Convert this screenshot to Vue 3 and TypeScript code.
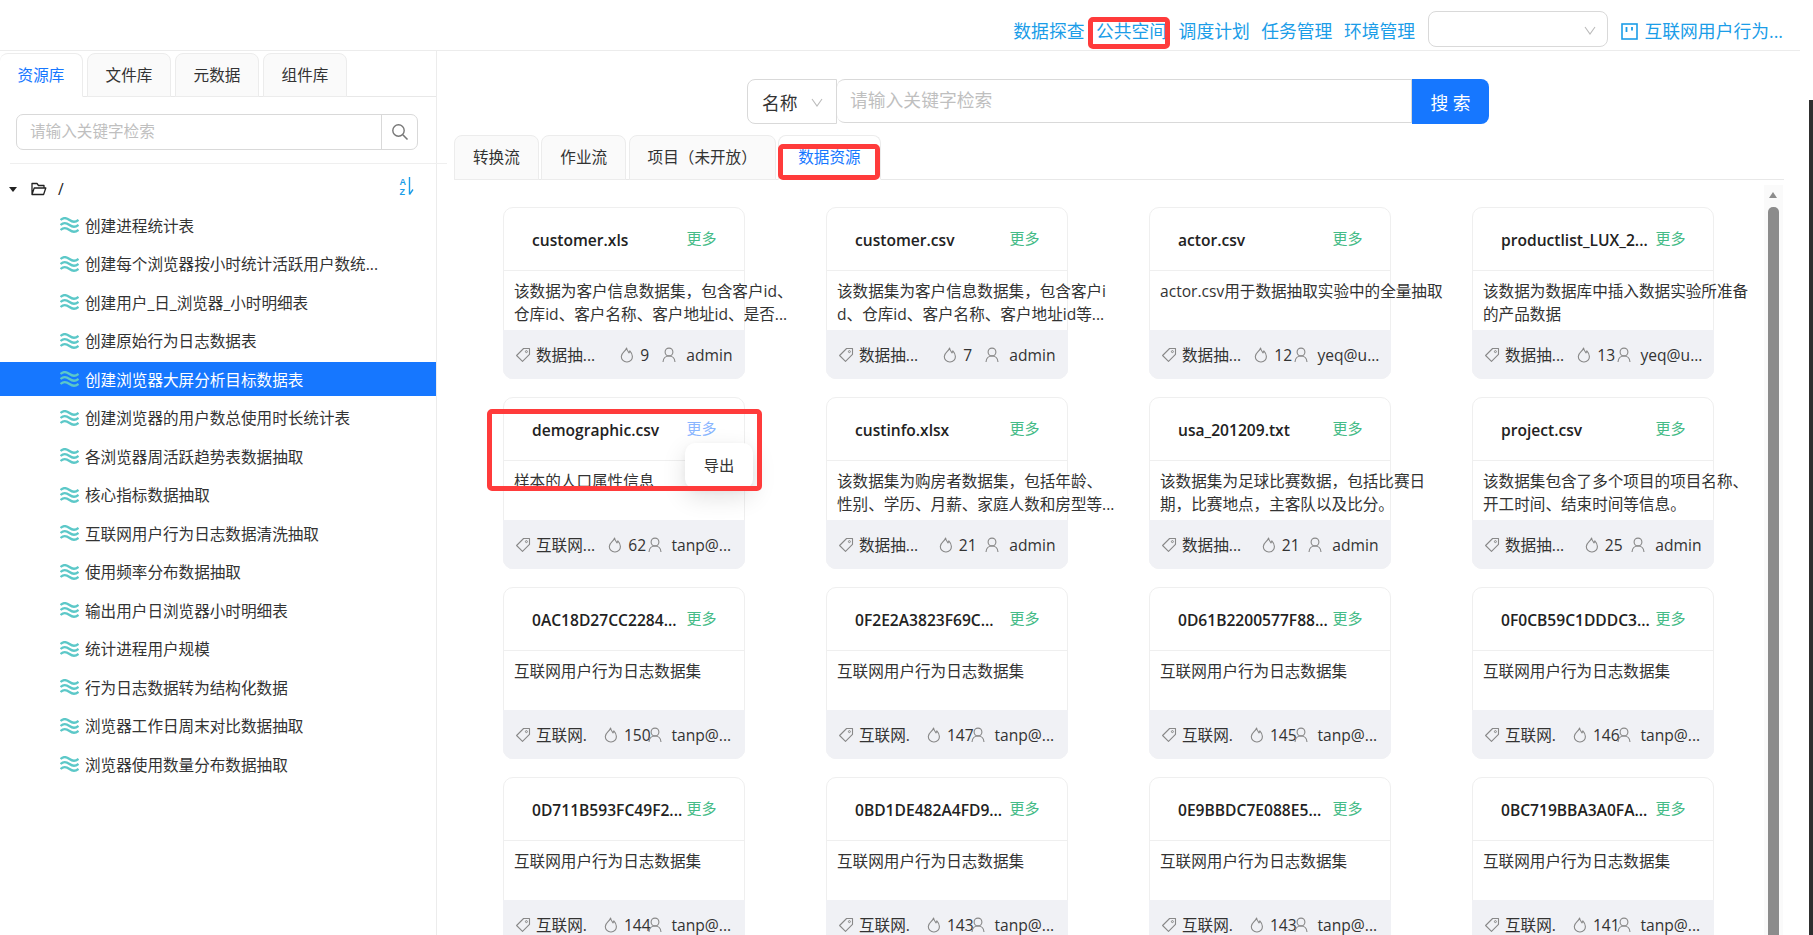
<template>
  <div class="page">
    <header class="topbar">
      <nav class="nav">
        <a v-for="item in navItems" :key="item" class="nav-link" :class="{ marked: item === '公共空间' }">
          {{ item }}
          <span v-if="item === '公共空间'" class="mark mark-nav"></span>
        </a>
      </nav>
      <div class="top-select">
        <svg class="chevron" width="14" height="14" viewBox="0 0 14 14"><path d="M2 4l5 7 5-7" fill="none" stroke="#bbb" stroke-width="1.1" /></svg>
      </div>
      <a class="project">
        <svg width="17" height="17" viewBox="0 0 17 17">
          <rect x="1" y="1" width="15" height="15" fill="none" stroke="#1b9de8" stroke-width="1.6" />
          <path d="M5.5 4v5M11 4v3.5" stroke="#1b9de8" stroke-width="1.8" fill="none" />
        </svg>
        <span>互联网用户行为...</span>
      </a>
    </header>

    <div class="body">
      <aside class="sider">
        <div class="tabs-left">
          <div v-for="(tab, i) in leftTabs" :key="tab" class="tab-left" :class="{ active: i === 0 }">{{ tab }}</div>
        </div>
        <div class="left-search">
          <div class="left-input">请输入关键字检索</div>
          <div class="left-btn">
            <svg width="18" height="18" viewBox="0 0 18 18">
              <circle cx="7.5" cy="7.5" r="5.7" fill="none" stroke="#777" stroke-width="1.4" />
              <path d="M11.8 11.8L16.5 16.5" stroke="#777" stroke-width="1.6" fill="none" />
            </svg>
          </div>
        </div>
        <div class="left-divider"></div>
        <div class="tree-root">
          <span class="caret"></span>
          <svg class="folder" width="16" height="14" viewBox="0 0 16 14">
            <path d="M1 12.5V1.5h5l1.5 2H13v2.5M1 12.5L3.2 6h11.6l-2.2 6.5z" fill="none" stroke="#222" stroke-width="1.3" stroke-linejoin="round" />
          </svg>
          <span class="root-name">/</span>
          <span class="sort">
            <span class="sort-letters"><b>A</b><b>Z</b></span>
            <svg width="6" height="19" viewBox="0 0 6 19"><path d="M1.500 0v17.500M1.500 17.500l3.500-5" fill="none" stroke="#1b9de8" stroke-width="1.4" /></svg>
          </span>
        </div>
        <ul class="tree">
          <li v-for="(name, i) in treeItems" :key="name" class="tree-row" :class="{ selected: i === 4 }">
            <svg width="19" height="16" viewBox="0 0 19 16">
              <path
                v-for="y in [3, 8, 13]"
                :key="y"
                :d="`M.5 ${y}c2.7-2.6 5.5-2.6 9 0s6 2.4 9 -.2`"
                fill="none"
                stroke="#5cc8c8"
                stroke-width="2.3"
              />
            </svg>
            <span>{{ name }}</span>
          </li>
        </ul>
      </aside>

      <main class="main">
        <div class="search-row">
          <div class="search-type">
            <span>名称</span>
            <svg width="14" height="14" viewBox="0 0 14 14"><path d="M2 4l5 7 5-7" fill="none" stroke="#bbb" stroke-width="1.1" /></svg>
          </div>
          <div class="search-input">请输入关键字检索</div>
          <button class="search-btn">搜 索</button>
        </div>

        <div class="tabs-main">
          <div v-for="tab in mainTabs" :key="tab" class="tab-main" :class="{ active: tab === '数据资源' }">
            {{ tab }}
            <span v-if="tab === '数据资源'" class="mark mark-tab"></span>
          </div>
        </div>

        <div class="panel">
          <div class="grid">
            <article v-for="card in cards" :key="card.title" class="card">
              <div class="card-head">
                <span class="card-title">{{ card.title }}</span>
                <span class="more" :class="{ hover: card.menu }">更多</span>
              </div>
              <div class="card-desc">
                <p v-for="line in card.desc" :key="line">{{ line }}</p>
              </div>
              <div class="card-foot">
                <span class="foot-tag">
                  <svg width="16" height="16" viewBox="0 0 16 16">
                    <path d="M8.6 1.5h5.9v5.9l-7 7-5.9-5.9z" fill="none" stroke="#888" stroke-width="1.1" stroke-linejoin="round" />
                    <circle cx="11.4" cy="4.6" r="1" fill="none" stroke="#888" />
                  </svg>
                  <span>{{ card.tag }}</span>
                </span>
                <span class="foot-hot">
                  <svg width="14" height="16" viewBox="0 0 14 16">
                    <path d="M6.6 1c.3 2.6 1.5 3.5 2.5 4.8.4-.6.6-1.1.7-1.9 1.5 1.6 2.6 3.4 2.6 5.5A5.400 5.400 0 0 1 7 15 5.500 5.500 0 0 1 1.300 9.400C1.300 6 5.500 4.600 6.600 1z" fill="none" stroke="#888" stroke-width="1.1" stroke-linejoin="round" />
                  </svg>
                  <span>{{ card.hot }}</span>
                </span>
                <span class="foot-user">
                  <svg width="14" height="16" viewBox="0 0 14 16">
                    <circle cx="7" cy="5" r="3.9" fill="none" stroke="#888" stroke-width="1.1" />
                    <path d="M1 15c.3-3.8 2.6-6 6-6s5.700 2.200 6 6" fill="none" stroke="#888" stroke-width="1.1" />
                  </svg>
                  <span class="user-name" :class="{ long: card.user !== 'admin' }">{{ card.user }}</span>
                </span>
              </div>
              <template v-if="card.menu">
                <div class="menu">导出</div>
                <span class="mark mark-card"></span>
              </template>
            </article>
          </div>
          <div class="scroll-track">
            <span class="scroll-arrow"></span>
            <span class="scroll-thumb"></span>
          </div>
        </div>
      </main>
    </div>
    <div class="window-edge"></div>
  </div>
</template>

<script setup lang="ts">
interface Card {
  title: string;
  desc: string[];
  tag: string;
  hot: number;
  user: string;
  menu?: boolean;
}

const navItems = ['数据探查', '公共空间', '调度计划', '任务管理', '环境管理'];
const leftTabs = ['资源库', '文件库', '元数据', '组件库'];
const mainTabs = ['转换流', '作业流', '项目（未开放）', '数据资源'];

const treeItems = [
  '创建进程统计表',
  '创建每个浏览器按小时统计活跃用户数统...',
  '创建用户_日_浏览器_小时明细表',
  '创建原始行为日志数据表',
  '创建浏览器大屏分析目标数据表',
  '创建浏览器的用户数总使用时长统计表',
  '各浏览器周活跃趋势表数据抽取',
  '核心指标数据抽取',
  '互联网用户行为日志数据清洗抽取',
  '使用频率分布数据抽取',
  '输出用户日浏览器小时明细表',
  '统计进程用户规模',
  '行为日志数据转为结构化数据',
  '浏览器工作日周末对比数据抽取',
  '浏览器使用数量分布数据抽取'
];

const logDesc = ['互联网用户行为日志数据集'];

const cards: Card[] = [
  { title: 'customer.xls', desc: ['该数据为客户信息数据集，包含客户id、', '仓库id、客户名称、客户地址id、是否...'], tag: '数据抽...', hot: 9, user: 'admin' },
  { title: 'customer.csv', desc: ['该数据集为客户信息数据集，包含客户i', 'd、仓库id、客户名称、客户地址id等...'], tag: '数据抽...', hot: 7, user: 'admin' },
  { title: 'actor.csv', desc: ['actor.csv用于数据抽取实验中的全量抽取'], tag: '数据抽...', hot: 12, user: 'yeq@u...' },
  { title: 'productlist_LUX_2...', desc: ['该数据为数据库中插入数据实验所准备', '的产品数据'], tag: '数据抽...', hot: 13, user: 'yeq@u...' },
  { title: 'demographic.csv', desc: ['样本的人口属性信息'], tag: '互联网...', hot: 62, user: 'tanp@...', menu: true },
  { title: 'custinfo.xlsx', desc: ['该数据集为购房者数据集，包括年龄、', '性别、学历、月薪、家庭人数和房型等...'], tag: '数据抽...', hot: 21, user: 'admin' },
  { title: 'usa_201209.txt', desc: ['该数据集为足球比赛数据，包括比赛日', '期，比赛地点，主客队以及比分。'], tag: '数据抽...', hot: 21, user: 'admin' },
  { title: 'project.csv', desc: ['该数据集包含了多个项目的项目名称、', '开工时间、结束时间等信息。'], tag: '数据抽...', hot: 25, user: 'admin' },
  { title: '0AC18D27CC2284...', desc: logDesc, tag: '互联网.', hot: 150, user: 'tanp@...' },
  { title: '0F2E2A3823F69C...', desc: logDesc, tag: '互联网.', hot: 147, user: 'tanp@...' },
  { title: '0D61B2200577F88...', desc: logDesc, tag: '互联网.', hot: 145, user: 'tanp@...' },
  { title: '0F0CB59C1DDDC3...', desc: logDesc, tag: '互联网.', hot: 146, user: 'tanp@...' },
  { title: '0D711B593FC49F2...', desc: logDesc, tag: '互联网.', hot: 144, user: 'tanp@...' },
  { title: '0BD1DE482A4FD9...', desc: logDesc, tag: '互联网.', hot: 143, user: 'tanp@...' },
  { title: '0E9BBDC7E088E5...', desc: logDesc, tag: '互联网.', hot: 143, user: 'tanp@...' },
  { title: '0BC719BBA3A0FA...', desc: logDesc, tag: '互联网.', hot: 141, user: 'tanp@...' }
];
</script>

<style>
html,
body {
  margin: 0;
  background: #fff;
  overflow: hidden;
}
</style>

<style scoped>
.page {
  position: relative;
  display: flex;
  flex-direction: column;
  height: 935px;
  overflow: hidden;
  font-family: "Open Sans", "Noto Sans CJK SC", sans-serif;
  font-size: 15.6px;
  color: #333;
}

.topbar {
  box-sizing: border-box;
  flex: none;
  display: flex;
  align-items: flex-start;
  justify-content: flex-end;
  width: 1800px;
  height: 51px;
  padding-right: 17px;
  border-bottom: 1px solid #ececec;
}

.nav {
  display: flex;
  gap: 11.5px;
  margin-top: 19px;
}

.nav-link {
  position: relative;
  font-size: 17.8px;
  line-height: 24px;
  color: #1b9de8;
  white-space: nowrap;
}

.top-select {
  box-sizing: border-box;
  position: relative;
  width: 180px;
  height: 36px;
  margin: 11px 13px 0 12.5px;
  border: 1px solid #d9d9d9;
  border-radius: 8px;
}

.chevron {
  position: absolute;
  right: 10px;
  top: 11px;
}

.project {
  display: flex;
  align-items: center;
  gap: 7px;
  margin-top: 19px;
  font-size: 17.8px;
  line-height: 24px;
  color: #1b9de8;
  white-space: nowrap;
}

.mark {
  position: absolute;
  box-sizing: border-box;
  border: 5px solid #ff3b3b;
  border-radius: 5px;
  pointer-events: none;
}

.mark-nav {
  left: -8px;
  top: -2px;
  width: 82px;
  height: 32px;
}

.mark-tab {
  left: -1px;
  top: 8px;
  width: 102px;
  height: 36px;
}

.mark-card {
  left: -17px;
  top: 11px;
  width: 275px;
  height: 82px;
}

.body {
  flex: 1;
  display: flex;
  min-height: 0;
}

.sider {
  box-sizing: border-box;
  flex: none;
  width: 437px;
  padding-top: 2px;
  border-right: 1px solid #ececec;
}

.tabs-left {
  display: flex;
  gap: 4px;
  height: 43px;
  border-bottom: 1px solid #e8e8e8;
}

.tab-left {
  box-sizing: border-box;
  width: 84px;
  height: 44px;
  line-height: 42px;
  text-align: center;
  background: #fafafa;
  border: 1px solid #ececec;
  border-radius: 8px 8px 0 0;
}

.tab-left.active {
  width: 83px;
  color: #1677ff;
  background: #fff;
  border-left: 0;
  border-bottom-color: #fff;
}

.left-search {
  box-sizing: border-box;
  display: flex;
  width: 402px;
  height: 36px;
  margin: 17px 0 0 16px;
  border: 1px solid #d9d9d9;
  border-radius: 7px;
}

.left-input {
  flex: 1;
  padding-left: 13px;
  line-height: 33px;
  color: #bfbfbf;
}

.left-btn {
  display: flex;
  align-items: center;
  justify-content: center;
  width: 35px;
  border-left: 1px solid #d9d9d9;
}

.left-divider {
  width: 437px;
  height: 1px;
  margin: 13px 0 0 10px;
  background: #efefef;
}

.tree-root {
  position: relative;
  display: flex;
  align-items: center;
  height: 30px;
  margin-top: 10px;
  padding-left: 9px;
}

.caret {
  width: 0;
  height: 0;
  border-left: 4px solid transparent;
  border-right: 4px solid transparent;
  border-top: 5px solid #222;
}

.folder {
  margin-left: 14px;
}

.root-name {
  margin-left: 11px;
  color: #222;
}

.sort {
  display: flex;
  gap: 2px;
  margin-left: auto;
  margin-right: 22px;
  margin-top: -4px;
  color: #1b9de8;
}

.sort-letters {
  display: flex;
  flex-direction: column;
  font-family: "Liberation Sans", sans-serif;
  font-size: 9px;
  line-height: 10.4px;
}

.tree {
  margin: 4px 0 0;
  padding: 0;
  list-style: none;
}

.tree-row {
  display: flex;
  align-items: center;
  gap: 6px;
  height: 34px;
  margin-bottom: 4.5px;
  padding-left: 60px;
  white-space: nowrap;
}

.tree-row.selected {
  color: #fff;
  background: #1677ff;
}

.main {
  flex: none;
  display: flex;
  flex-direction: column;
  width: 1330px;
  margin-left: 17px;
}

.search-row {
  flex: none;
  display: flex;
  margin: 28px 0 0 293px;
  height: 45px;
}

.search-type {
  box-sizing: border-box;
  display: flex;
  align-items: center;
  gap: 12px;
  width: 90px;
  padding-left: 14px;
  font-size: 17.8px;
  border: 1px solid #d9d9d9;
  border-radius: 8px 0 0 8px;
}

.search-input {
  box-sizing: border-box;
  width: 575px;
  height: 44px;
  padding-left: 13px;
  font-size: 17.8px;
  line-height: 40px;
  color: #bfbfbf;
  border: 1px solid #d9d9d9;
  border-left: 0;
  border-radius: 8px 0 0 8px;
}

.search-btn {
  width: 77px;
  height: 45px;
  padding: 0;
  font: inherit;
  font-size: 17.8px;
  color: #fff;
  background: #1677ff;
  border: 0;
  border-radius: 0 8px 8px 0;
}

.tabs-main {
  flex: none;
  display: flex;
  gap: 2.5px;
  height: 44px;
  margin-top: 11px;
  border-bottom: 1px solid #e8e8e8;
}

.tab-main {
  box-sizing: border-box;
  position: relative;
  height: 45px;
  padding: 0 18px;
  line-height: 43px;
  white-space: nowrap;
  background: #fafafa;
  border: 1px solid #ececec;
  border-radius: 8px 8px 0 0;
}

.tab-main.active {
  padding: 0 19px;
  color: #1677ff;
  background: #fff;
  border-bottom-color: #fff;
}

.panel {
  flex: 1;
  display: flex;
  min-height: 0;
}

.grid {
  flex: none;
  display: grid;
  grid-template-columns: repeat(4, 241.5px);
  grid-auto-rows: 172px;
  column-gap: 81.5px;
  row-gap: 18px;
  width: 1210px;
  margin: 27px 0 0 49px;
}

.card {
  box-sizing: border-box;
  position: relative;
  display: flex;
  flex-direction: column;
  border: 1px solid #efefef;
  border-radius: 10px;
}

.card-head {
  flex: none;
  display: flex;
  align-items: center;
  height: 62px;
  padding-left: 28px;
  border-bottom: 1px solid #efefef;
}

.card-title {
  flex: none;
  width: 154.5px;
  margin-top: 2px;
  font-size: 15.6px;
  font-weight: 600;
  color: #222;
  white-space: nowrap;
}

.more {
  margin-top: -4px;
  font-size: 15px;
  color: #45bb87;
  white-space: nowrap;
}

.more.hover {
  color: #8ab6ff;
}

.card-desc {
  flex: 1;
  padding: 9px 0 0 10px;
  line-height: 23.4px;
  white-space: nowrap;
}

.card-desc p {
  margin: 0;
}

.card-foot {
  flex: none;
  display: flex;
  align-items: center;
  height: 49px;
  margin: 0 -1px -1px;
  padding: 0 12px 0 12px;
  color: #333;
  background: #f0f1f5;
  border-radius: 0 0 10px 10px;
}

.card-foot svg {
  flex: none;
}

.foot-tag {
  flex: none;
  display: flex;
  align-items: center;
  gap: 5px;
  width: 92px;
  white-space: nowrap;
}

.foot-hot {
  flex: 1;
  display: flex;
  align-items: center;
  justify-content: center;
  gap: 6px;
  min-width: 0;
}

.foot-user {
  flex: none;
  display: flex;
  align-items: center;
  gap: 10px;
  white-space: nowrap;
}

.user-name.long {
  width: 61px;
}

.menu {
  position: absolute;
  left: 181px;
  top: 45px;
  width: 68px;
  height: 46px;
  line-height: 44px;
  text-align: center;
  font-size: 15.3px;
  background: #fff;
  border-radius: 10px;
  box-shadow: 0 8px 24px rgba(0, 0, 0, 0.12), 0 2px 6px rgba(0, 0, 0, 0.04);
}

.scroll-track {
  position: relative;
  flex: none;
  width: 19px;
  margin: 5px 0 0 51px;
  background: #fafafa;
}

.scroll-arrow {
  position: absolute;
  left: 5px;
  top: 7px;
  width: 0;
  height: 0;
  border-left: 4.5px solid transparent;
  border-right: 4.5px solid transparent;
  border-bottom: 6px solid #8c8c8c;
}

.scroll-thumb {
  position: absolute;
  left: 4px;
  top: 22px;
  bottom: 0;
  width: 11px;
  background: #8c8c8c;
  border-radius: 5px 5px 0 0;
}

.window-edge {
  position: absolute;
  right: 0;
  top: 100px;
  bottom: 0;
  width: 4px;
  background: #2f2f2f;
}
</style>
